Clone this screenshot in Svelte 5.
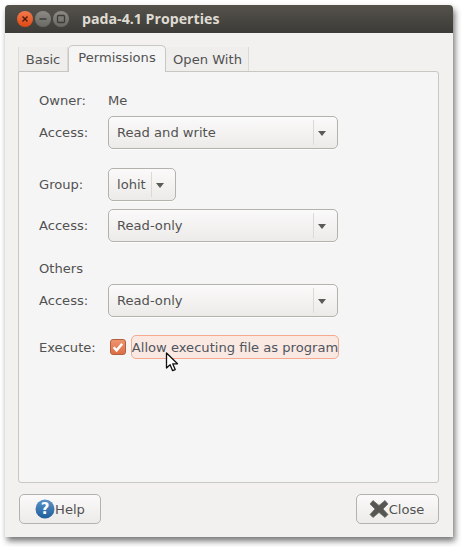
<script>
  // Onglet Permissions de la fenêtre de propriétés
  const sections = [
    { label: 'Owner:', kind: 'text', value: 'Me', cls: 'owner' },
    { label: 'Access:', kind: 'combo', value: 'Read and write', cls: 'gap-after' },
    { label: 'Group:', kind: 'small', value: 'lohit', cls: 'group' },
    { label: 'Access:', kind: 'combo', value: 'Read-only', cls: 'gap-before-others' },
    { label: 'Others', kind: 'none', value: '', cls: 'others' },
    { label: 'Access:', kind: 'combo', value: 'Read-only', cls: 'access3' }
  ];
</script>

<div class="page">
  <div class="window">
    <header class="titlebar">
      <div class="controls">
        <span class="ctl close">
          <svg viewBox="0 0 16 16" width="16" height="16"><path d="M5.500 5.500l5 5M10.500 5.500l-5 5" stroke="#4a1a0c" stroke-width="1.400" fill="none" /></svg>
        </span>
        <span class="ctl">
          <svg viewBox="0 0 16 16" width="16" height="16"><path d="M4.500 8h7" stroke="#3c3b37" stroke-width="1.500" fill="none" /></svg>
        </span>
        <span class="ctl">
          <svg viewBox="0 0 16 16" width="16" height="16"><rect x="4.500" y="4.500" width="7" height="7" rx="1" stroke="#3c3b37" stroke-width="1.300" fill="none" /></svg>
        </span>
      </div>
      <span class="title">pada-4.1 Properties</span>
    </header>

    <div class="body">
      <nav class="tabs">
        <span class="tab t-basic">Basic</span>
        <span class="tab t-perm active">Permissions</span>
        <span class="tab t-open">Open With</span>
      </nav>

      <section class="panel">
        {#each sections as row}
          <div class="row {row.cls}">
            <span class="lbl">{row.label}</span>
            {#if row.kind === 'text'}
              <span>{row.value}</span>
            {:else if row.kind === 'combo' || row.kind === 'small'}
              <div class="combo {row.kind}">
                <span class="val">{row.value}</span>
                <span class="sep"></span>
                <span class="arrow"></span>
              </div>
            {/if}
          </div>
        {/each}

        <div class="row execute">
          <span class="lbl">Execute:</span>
          <span class="check">
            <svg viewBox="0 0 16 16" width="16" height="16"><path d="M3.600 8.200l3 3.200 5.600-6.600" stroke="#fff" stroke-width="2.400" fill="none" /></svg>
          </span>
          <span class="allow">Allow executing file as program</span>
          <svg class="cursor" viewBox="0 0 14 20" width="14" height="20">
            <path d="M1.500 1v15l3.600-3.300 2.500 6 2.600-1.100-2.500-5.800h4.800z" fill="#fff" stroke="#111" stroke-width="1.300" stroke-linejoin="round" />
          </svg>
        </div>
      </section>

      <footer class="actions">
        <button class="btn help">
          <svg viewBox="0 0 20 20" width="20" height="20">
            <defs>
              <linearGradient id="hg" x1="0" y1="0" x2="0" y2="1">
                <stop offset="0" stop-color="#5b93c7" />
                <stop offset="1" stop-color="#1f5d9c" />
              </linearGradient>
            </defs>
            <circle cx="10" cy="10" r="9.500" fill="url(#hg)" />
            <text x="10" y="15" text-anchor="middle" class="q">?</text>
          </svg>
          <span>Help</span>
        </button>
        <button class="btn close-btn">
          <svg class="x-icon" viewBox="0 0 20 20" width="20" height="20">
            <path d="M4 1.500L10 6.500l6-5L19 5l-5 5 5 5.500-3 3L10 13.500l-6 5-3-3L6 10 1 5z" fill="#565652" stroke="#6e6e6a" stroke-width="0.800" stroke-linejoin="round" />
          </svg>
          <span>Close</span>
        </button>
      </footer>
    </div>
  </div>
</div>

<style>
  :global(body) {
    margin: 0;
    background: #fff;
  }
  .page {
    box-sizing: border-box;
    height: 547px;
    padding: 5px 0 0 5px;
  }
  .window {
    box-sizing: border-box;
    width: 448px;
    height: 532px;
    display: flex;
    flex-direction: column;
    background: #f2f1f0;
    border-radius: 4px 4px 0 0;
    box-shadow: 2px 4px 6px rgba(0, 0, 0, 0.55);
    font-family: 'DejaVu Sans', sans-serif;
    font-size: 13.1px;
    color: #525252;
  }
  .titlebar {
    flex: none;
    height: 28px;
    display: flex;
    align-items: center;
    background: linear-gradient(#55524c, #3c3b37);
    border-radius: 4px 4px 0 0;
  }
  .controls {
    display: flex;
    gap: 2px;
    margin-left: 12px;
    width: 65px;
  }
  .ctl {
    width: 16px;
    height: 16px;
    border-radius: 50%;
    background: linear-gradient(#8a8983, #6a6964);
  }
  .ctl svg {
    display: block;
  }
  .ctl.close {
    background: linear-gradient(#f57a4c, #dd4814);
  }
  .title {
    font-family: 'Open Sans', sans-serif;
    font-size: 14.2px;
    font-weight: bold;
    color: #dfdbd2;
    padding-bottom: 2px;
  }
  .body {
    flex: 1;
    display: flex;
    flex-direction: column;
    padding: 12px 14px 13px 13px;
    min-height: 0;
  }
  .tabs {
    flex: none;
    height: 26px;
    display: flex;
    align-items: flex-end;
    position: relative;
    z-index: 1;
  }
  .tab {
    box-sizing: border-box;
    height: 24px;
    display: flex;
    align-items: center;
    justify-content: center;
    border-right: 1px solid #dcdad5;
    background: #efeeed;
    padding-top: 1px;
  }
  .t-basic {
    width: 50px;
    border-left: 1px solid #dcdad5;
  }
  .t-perm {
    width: 98px;
  }
  .t-open {
    width: 83px;
    padding-left: 1px;
  }
  .tab.active {
    height: 27px;
    margin-bottom: -1px;
    padding: 0 0 3px;
    background: #f5f5f5;
    border: 1px solid #c9c7c2;
    border-bottom: none;
    border-radius: 5px 5px 0 0;
  }
  .panel {
    box-sizing: border-box;
    height: 412px;
    background: #f5f5f5;
    border: 1px solid #c9c7c2;
    border-radius: 0 3px 3px 3px;
    padding: 20px 0 0 20px;
  }
  .row {
    display: flex;
    align-items: center;
    position: relative;
  }
  .lbl {
    flex: none;
    width: 69px;
  }
  .owner {
    height: 17px;
    margin-bottom: 7px;
  }
  .gap-after {
    margin-bottom: 19px;
  }
  .gap-before-others {
    margin-bottom: 18px;
  }
  .group {
    margin-bottom: 8px;
  }
  .others {
    height: 17px;
    margin-bottom: 7px;
  }
  .access3 {
    margin-bottom: 18px;
  }
  .combo {
    box-sizing: border-box;
    height: 33px;
    width: 230px;
    display: flex;
    align-items: center;
    border: 1px solid #b4b2ad;
    border-radius: 5px;
    background: linear-gradient(#fbfafa, #ecebe9);
    box-shadow: 0 1px 0 rgba(255, 255, 255, 0.7);
    padding-left: 8px;
  }
  .combo.small {
    width: 68px;
  }
  .val {
    flex: 1;
  }
  .sep {
    width: 1px;
    height: 25px;
    background: #dcdad6;
    margin-right: 4px;
  }
  .arrow {
    width: 0;
    height: 0;
    border-left: 4px solid transparent;
    border-right: 4px solid transparent;
    border-top: 5px solid #5a5a56;
    margin: 2px 11px 0 0;
  }
  .execute {
    height: 24px;
  }
  .check {
    box-sizing: border-box;
    flex: none;
    width: 16px;
    height: 16px;
    margin-left: 2px;
    border-radius: 3px;
    border: 1px solid #b0603c;
    background: linear-gradient(#ef9470, #dd6e46);
  }
  .check svg {
    display: block;
    margin: -1px;
  }
  .allow {
    box-sizing: border-box;
    height: 24px;
    width: 208px;
    margin-left: 5px;
    display: flex;
    align-items: center;
    justify-content: center;
    white-space: nowrap;
    background: #fae9e2;
    border: 1px solid #f5a98e;
    border-radius: 5px;
    color: #4f5560;
  }
  .cursor {
    position: absolute;
    left: 126px;
    top: 17px;
  }
  .actions {
    flex: 1;
    display: flex;
    justify-content: space-between;
    align-items: flex-start;
    padding: 11px 0 0 1px;
  }
  .btn {
    box-sizing: border-box;
    height: 30px;
    display: flex;
    align-items: center;
    justify-content: center;
    border: 1px solid #b4b2ad;
    border-radius: 5px;
    background: linear-gradient(#fbfafa, #ecebe9);
    font: inherit;
    color: inherit;
    padding: 0;
  }
  .help {
    width: 82px;
  }
  .close-btn {
    width: 83px;
    padding-right: 2px;
  }
  .q {
    fill: #fff;
    font-size: 15px;
    font-weight: bold;
    font-family: 'DejaVu Sans', sans-serif;
  }
</style>
